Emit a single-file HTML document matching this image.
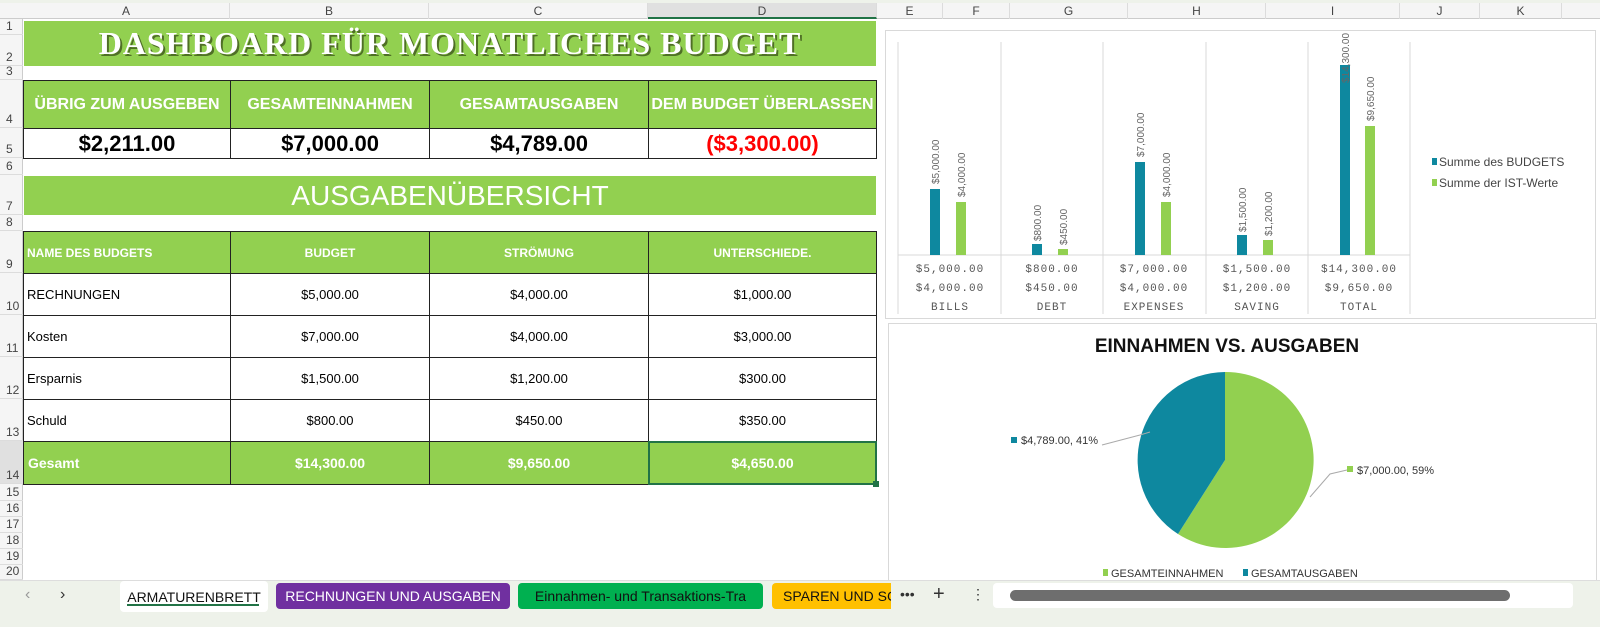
<!DOCTYPE html>
<html><head><meta charset="utf-8"><style>
*{margin:0;padding:0;box-sizing:border-box}
body{width:1600px;height:627px;overflow:hidden;background:#fff;font-family:"Liberation Sans",sans-serif;position:relative}
.a{position:absolute}
.ch{position:absolute;top:3px;height:16px;font-size:12px;color:#444;text-align:center;line-height:16px;border-right:1px solid #dcdcdc}
.rn{position:absolute;left:0;width:23px;font-size:12px;color:#444;text-align:left;padding-left:6px;border-bottom:1px solid #dcdcdc;display:flex;align-items:flex-end;padding-bottom:1px}
.g{background:#92d050}
.c{position:absolute;display:flex;align-items:center;justify-content:center;border:1px solid #222}
.w{color:#fff;font-weight:bold}
.cell{font-size:13px;color:#000}
</style></head><body>
<div class="a" style="left:0;top:0;width:1600px;height:3px;background:#eef2ea"></div>
<div class="a" style="left:0;top:3px;width:1600px;height:16px;background:#f5f5f5;border-bottom:1px solid #ccc"></div>
<div class="ch" style="left:23px;width:207px">A</div>
<div class="ch" style="left:230px;width:199px">B</div>
<div class="ch" style="left:429px;width:219px">C</div>
<div class="ch" style="left:648px;width:229px;background:#e0e0e0;border-bottom:2px solid #217346">D</div>
<div class="ch" style="left:877px;width:66px">E</div>
<div class="ch" style="left:943px;width:67px">F</div>
<div class="ch" style="left:1010px;width:118px">G</div>
<div class="ch" style="left:1128px;width:138px">H</div>
<div class="ch" style="left:1266px;width:134px">I</div>
<div class="ch" style="left:1400px;width:80px">J</div>
<div class="ch" style="left:1480px;width:82px">K</div>
<div class="a" style="left:0;top:19px;width:23px;height:561px;background:#f5f5f5;border-right:1px solid #ccc"></div>
<div class="rn" style="top:19px;height:16px">1</div>
<div class="rn" style="top:35px;height:31px">2</div>
<div class="rn" style="top:66px;height:14px">3</div>
<div class="rn" style="top:80px;height:48px">4</div>
<div class="rn" style="top:128px;height:30px">5</div>
<div class="rn" style="top:158px;height:17px">6</div>
<div class="rn" style="top:175px;height:40px">7</div>
<div class="rn" style="top:215px;height:16px">8</div>
<div class="rn" style="top:231px;height:42px">9</div>
<div class="rn" style="top:273px;height:42px">10</div>
<div class="rn" style="top:315px;height:42px">11</div>
<div class="rn" style="top:357px;height:42px">12</div>
<div class="rn" style="top:399px;height:42px">13</div>
<div class="rn" style="top:441px;height:43px;background:#e0e0e0">14</div>
<div class="rn" style="top:484px;height:17px">15</div>
<div class="rn" style="top:501px;height:16px">16</div>
<div class="rn" style="top:517px;height:16px">17</div>
<div class="rn" style="top:533px;height:16px">18</div>
<div class="rn" style="top:549px;height:16px">19</div>
<div class="rn" style="top:565px;height:15px">20</div>

<div class="a g" style="left:24px;top:21px;width:852px;height:45px;display:flex;align-items:center;justify-content:center;color:#fff;font-family:'Liberation Serif',serif;font-weight:bold;font-size:32px;letter-spacing:1px;text-shadow:2px 2px 0 #4f6f26">DASHBOARD FÜR MONATLICHES BUDGET</div>

<div class="c g w" style="left:23px;top:80px;width:208px;height:49px;font-size:16px">ÜBRIG ZUM AUSGEBEN</div>
<div class="c g w" style="left:230px;top:80px;width:200px;height:49px;font-size:16px">GESAMTEINNAHMEN</div>
<div class="c g w" style="left:429px;top:80px;width:220px;height:49px;font-size:16px">GESAMTAUSGABEN</div>
<div class="c g w" style="left:648px;top:80px;width:229px;height:49px;font-size:16px">DEM BUDGET ÜBERLASSEN</div>
<div class="c" style="left:23px;top:128px;width:208px;height:31px;font-size:22px;font-weight:bold">$2,211.00</div>
<div class="c" style="left:230px;top:128px;width:200px;height:31px;font-size:22px;font-weight:bold">$7,000.00</div>
<div class="c" style="left:429px;top:128px;width:220px;height:31px;font-size:22px;font-weight:bold">$4,789.00</div>
<div class="c" style="left:648px;top:128px;width:229px;height:31px;font-size:22px;font-weight:bold;color:#f00">($3,300.00)</div>

<div class="a g" style="left:24px;top:176px;width:852px;height:39px;display:flex;align-items:center;justify-content:center;color:#fff;font-size:28px">AUSGABENÜBERSICHT</div>

<div class="c g w" style="left:23px;top:231px;width:208px;height:43px;font-size:12px;justify-content:flex-start;padding-left:3px">NAME DES BUDGETS</div>
<div class="c g w" style="left:230px;top:231px;width:200px;height:43px;font-size:12px">BUDGET</div>
<div class="c g w" style="left:429px;top:231px;width:220px;height:43px;font-size:12px">STRÖMUNG</div>
<div class="c g w" style="left:648px;top:231px;width:229px;height:43px;font-size:12px">UNTERSCHIEDE.</div>

<div class="c cell" style="left:23px;top:273px;width:208px;height:43px;justify-content:flex-start;padding-left:3px">RECHNUNGEN</div>
<div class="c cell" style="left:230px;top:273px;width:200px;height:43px">$5,000.00</div>
<div class="c cell" style="left:429px;top:273px;width:220px;height:43px">$4,000.00</div>
<div class="c cell" style="left:648px;top:273px;width:229px;height:43px">$1,000.00</div>
<div class="c cell" style="left:23px;top:315px;width:208px;height:43px;justify-content:flex-start;padding-left:3px">Kosten</div>
<div class="c cell" style="left:230px;top:315px;width:200px;height:43px">$7,000.00</div>
<div class="c cell" style="left:429px;top:315px;width:220px;height:43px">$4,000.00</div>
<div class="c cell" style="left:648px;top:315px;width:229px;height:43px">$3,000.00</div>
<div class="c cell" style="left:23px;top:357px;width:208px;height:43px;justify-content:flex-start;padding-left:3px">Ersparnis</div>
<div class="c cell" style="left:230px;top:357px;width:200px;height:43px">$1,500.00</div>
<div class="c cell" style="left:429px;top:357px;width:220px;height:43px">$1,200.00</div>
<div class="c cell" style="left:648px;top:357px;width:229px;height:43px">$300.00</div>
<div class="c cell" style="left:23px;top:399px;width:208px;height:43px;justify-content:flex-start;padding-left:3px">Schuld</div>
<div class="c cell" style="left:230px;top:399px;width:200px;height:43px">$800.00</div>
<div class="c cell" style="left:429px;top:399px;width:220px;height:43px">$450.00</div>
<div class="c cell" style="left:648px;top:399px;width:229px;height:43px">$350.00</div>
<div class="c g w" style="left:23px;top:441px;width:208px;height:44px;font-size:14px;justify-content:flex-start;padding-left:4px">Gesamt</div>
<div class="c g w" style="left:230px;top:441px;width:200px;height:44px;font-size:14px">$14,300.00</div>
<div class="c g w" style="left:429px;top:441px;width:220px;height:44px;font-size:14px">$9,650.00</div>
<div class="c g w" style="left:648px;top:441px;width:229px;height:44px;font-size:14px;border:2px solid #217346">$4,650.00</div>
<div class="a" style="left:873px;top:481px;width:6px;height:6px;background:#217346"></div>

<svg class="a" style="left:0;top:0" width="1600" height="580">
<rect x="885.5" y="30.5" width="710" height="288" fill="#fff" stroke="#d9d9d9"/>
<g stroke="#d9d9d9"><line x1="898" y1="42" x2="898" y2="314"/><line x1="1001" y1="42" x2="1001" y2="314"/><line x1="1103" y1="42" x2="1103" y2="314"/><line x1="1206" y1="42" x2="1206" y2="314"/><line x1="1308" y1="42" x2="1308" y2="314"/><line x1="1410" y1="42" x2="1410" y2="314"/><line x1="898" y1="255" x2="1410" y2="255"/></g>
<g fill="#0e889f"><rect x="930" y="189" width="10" height="66"/><rect x="1032" y="244" width="10" height="11"/><rect x="1135" y="162" width="10" height="93"/><rect x="1237" y="235" width="10" height="20"/><rect x="1340" y="65" width="10" height="190"/></g>
<g fill="#92d050"><rect x="956" y="202" width="10" height="53"/><rect x="1058" y="249" width="10" height="6"/><rect x="1161" y="202" width="10" height="53"/><rect x="1263" y="240" width="10" height="15"/><rect x="1365" y="126" width="10" height="129"/></g>
<g font-size="10" fill="#666" font-family="Liberation Sans">
<text transform="translate(939,184) rotate(-90)">$5,000.00</text><text transform="translate(965,197) rotate(-90)">$4,000.00</text>
<text transform="translate(1041,241) rotate(-90)">$800.00</text><text transform="translate(1067,245) rotate(-90)">$450.00</text>
<text transform="translate(1144,157) rotate(-90)">$7,000.00</text><text transform="translate(1170,197) rotate(-90)">$4,000.00</text>
<text transform="translate(1246,232) rotate(-90)">$1,500.00</text><text transform="translate(1272,236) rotate(-90)">$1,200.00</text>
<text transform="translate(1349,83) rotate(-90)">$14,300.00</text><text transform="translate(1374,121) rotate(-90)">$9,650.00</text>
</g>
<g font-size="11" fill="#555" text-anchor="middle" letter-spacing="1" font-family="Liberation Mono">
<text x="950" y="272">$5,000.00</text><text x="950" y="291">$4,000.00</text><text x="950" y="310">BILLS</text>
<text x="1052" y="272">$800.00</text><text x="1052" y="291">$450.00</text><text x="1052" y="310">DEBT</text>
<text x="1154" y="272">$7,000.00</text><text x="1154" y="291">$4,000.00</text><text x="1154" y="310">EXPENSES</text>
<text x="1257" y="272">$1,500.00</text><text x="1257" y="291">$1,200.00</text><text x="1257" y="310">SAVING</text>
<text x="1359" y="272">$14,300.00</text><text x="1359" y="291">$9,650.00</text><text x="1359" y="310">TOTAL</text>
</g>
<rect x="1432" y="158" width="5" height="7" fill="#0e889f"/><text x="1439" y="166" font-size="12" fill="#444">Summe des BUDGETS</text>
<rect x="1432" y="179" width="5" height="7" fill="#92d050"/><text x="1439" y="187" font-size="12" fill="#444">Summe der IST-Werte</text>

<rect x="888.5" y="323.5" width="708" height="262" fill="#fff" stroke="#d9d9d9"/>
<text x="1227" y="352" font-size="19" font-weight="bold" text-anchor="middle" fill="#111">EINNAHMEN VS. AUSGABEN</text>
<path d="M1225,460 L1225,372 A88,88 0 1 1 1178,534 Z" fill="#92d050"/>
<path d="M1225,460 L1178,534 A88,88 0 0 1 1225,372 Z" fill="#0e889f"/>
<polyline points="1102,445 1140,435 1150,432" fill="none" stroke="#aaa"/>
<polyline points="1347,470 1330,474 1310,497" fill="none" stroke="#aaa"/>
<rect x="1011" y="437" width="6" height="6" fill="#0e889f"/><text x="1021" y="444" font-size="11" fill="#333">$4,789.00, 41%</text>
<rect x="1347" y="466" width="6" height="6" fill="#92d050"/><text x="1357" y="474" font-size="11" fill="#333">$7,000.00, 59%</text>
<rect x="1103" y="569" width="5" height="7" fill="#92d050"/><text x="1111" y="577" font-size="11" fill="#333">GESAMTEINNAHMEN</text>
<rect x="1243" y="569" width="5" height="7" fill="#0e889f"/><text x="1251" y="577" font-size="11" fill="#333">GESAMTAUSGABEN</text>
</svg>

<div class="a" style="left:0;top:580px;width:1600px;height:47px;background:#eef2ea;border-top:1px solid #ddd"></div>
<div class="a" style="left:25px;top:586px;color:#999;font-size:16px">&#x2039;</div>
<div class="a" style="left:60px;top:586px;color:#333;font-size:16px">&#x203A;</div>
<div class="a" style="left:120px;top:581px;width:148px;height:31px;background:#fff;border-radius:4px;display:flex;align-items:center;justify-content:center;font-size:14px;color:#111">ARMATURENBRETT</div>
<div class="a" style="left:127px;top:604px;width:132px;height:2px;background:#217346"></div>
<div class="a" style="left:276px;top:583px;width:234px;height:26px;background:#7030a0;border-radius:4px;display:flex;align-items:center;justify-content:center;font-size:14px;color:#fff">RECHNUNGEN UND AUSGABEN</div>
<div class="a" style="left:518px;top:583px;width:245px;height:26px;background:#00b050;border-radius:4px;display:flex;align-items:center;justify-content:center;font-size:14px;color:#111">Einnahmen- und Transaktions-Tra</div>
<div class="a" style="left:772px;top:583px;width:119px;height:26px;background:#ffc000;border-radius:4px 0 0 4px;overflow:hidden;white-space:nowrap;padding-left:11px;line-height:26px;font-size:14px;color:#111">SPAREN UND SCHULD</div>
<div class="a" style="left:900px;top:586px;font-size:14px;color:#333">•••</div>
<div class="a" style="left:933px;top:583px;font-size:20px;color:#333">+</div>
<div class="a" style="left:971px;top:586px;font-size:14px;color:#333">⋮</div>
<div class="a" style="left:993px;top:583px;width:580px;height:25px;background:#fff;border-radius:4px"></div>
<div class="a" style="left:1010px;top:590px;width:500px;height:11px;background:#6e6e6e;border-radius:6px"></div>
</body></html>
